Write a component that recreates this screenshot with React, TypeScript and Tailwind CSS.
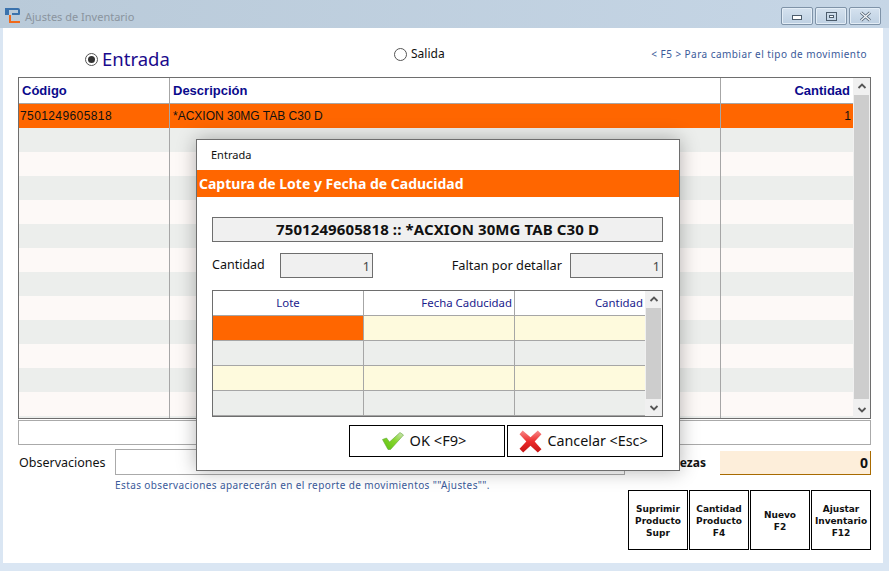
const tahoma = "font-['Noto_Sans','DejaVu_Sans',sans-serif]";

const mainRows = Array.from({ length: 13 }, (_, i) => i);

function Logo() {
  return (
    <svg width="17" height="17" viewBox="0 0 17 17" className="ml-[4px] mt-[7px] shrink-0">
      <path d="M1 1H14a2 2 0 0 1 2 2V7a1 1 0 0 1-1 1H8V6H14V3H5V8H1z" fill="#3a72ad" />
      <path d="M5 8H7V14H16V16H5z" fill="#f0691a" />
    </svg>
  );
}

function WinButton({ kind }: { kind: "min" | "max" | "close" }) {
  return (
    <div className="w-[32px] h-[18px] rounded-[2px] border border-[#7f93a8] bg-gradient-to-b from-[#d5e2ef] to-[#bed0e2] flex items-center justify-center shadow-[inset_0_0_0_1px_#e3edf6]">
      {kind === "min" && <div className="w-[10px] h-[5px] mt-[3px] border border-[#4c5c6c] bg-white" />}
      {kind === "max" && (
        <div className="w-[11px] h-[9px] border border-[#4c5c6c] flex items-center justify-center">
          <div className="w-[5px] h-[3px] border border-[#4c5c6c] bg-white" />
        </div>
      )}
      {kind === "close" && (
        <svg width="13" height="11" viewBox="0 0 13 11">
          <path d="M2 1.5l9 8M11 1.5l-9 8" stroke="#4c5c6c" strokeWidth="3" />
          <path d="M2 1.5l9 8M11 1.5l-9 8" stroke="#f2f5f8" strokeWidth="1.4" />
        </svg>
      )}
    </div>
  );
}

function Radio({ checked }: { checked?: boolean }) {
  return (
    <div className="w-[13px] h-[13px] rounded-full border border-[#555] bg-white flex items-center justify-center shrink-0">
      {checked && <div className="w-[7px] h-[7px] rounded-full bg-[#333]" />}
    </div>
  );
}

function ScrollBar({ thumb }: { thumb: string }) {
  return (
    <div className="w-[17px] flex flex-col bg-[#f0f0f0] items-center">
      <svg width="10" height="17" viewBox="0 0 10 17" className="shrink-0">
        <path d="M1.5 10L5 6.5 8.5 10" stroke="#555" strokeWidth="1.8" fill="none" />
      </svg>
      <div className={`${thumb} w-[15px] bg-[#cdcdcd]`} />
      <div className="flex-1" />
      <svg width="10" height="17" viewBox="0 0 10 17" className="shrink-0">
        <path d="M1.5 7L5 10.5 8.5 7" stroke="#555" strokeWidth="1.8" fill="none" />
      </svg>
    </div>
  );
}

function ActionButton({ lines }: { lines: string[] }) {
  return (
    <button className="w-[60px] h-[60px] pt-[2px] border border-black bg-white flex flex-col items-center justify-center font-['DejaVu_Sans',sans-serif] text-[9px] leading-[12px] font-bold text-[#111]">
      {lines.map((l) => (
        <span key={l}>{l}</span>
      ))}
    </button>
  );
}

function CheckIcon() {
  return (
    <svg width="22" height="18" viewBox="0 0 22 18">
      <defs>
        <linearGradient id="chk" x1="0" y1="1" x2="1" y2="0">
          <stop offset="0" stopColor="#5cc010" />
          <stop offset="0.55" stopColor="#86d62c" />
          <stop offset="1" stopColor="#d2e4c0" />
        </linearGradient>
      </defs>
      <path d="M0.5 7.5l4-1.5 3 4L18 0.5l3.5 2.5L8.5 17.5H6z" fill="url(#chk)" stroke="#62a838" strokeWidth="0.6" />
    </svg>
  );
}

function CrossIcon() {
  return (
    <svg width="23" height="23" viewBox="0 0 22 22">
      <defs>
        <linearGradient id="crs" x1="0" y1="0" x2="0" y2="1">
          <stop offset="0" stopColor="#f88a8a" />
          <stop offset="0.5" stopColor="#ec2a2a" />
          <stop offset="1" stopColor="#c41414" />
        </linearGradient>
      </defs>
      <path d="M3.5 0.5L11 7l7-6.5 3.5 3.5L15 11l6.5 7.5-3.5 3L11 15l-7 6.5-3.5-3.5L7 11 0.5 4z" fill="url(#crs)" />
    </svg>
  );
}

function LoteModal() {
  const rows = [
    ["bg-[#ff6600]", "bg-[#fefadd]", "bg-[#fefadd]"],
    ["bg-[#eceeec]", "bg-[#eceeec]", "bg-[#eceeec]"],
    ["bg-[#fefadd]", "bg-[#fefadd]", "bg-[#fefadd]"],
    ["bg-[#eceeec]", "bg-[#eceeec]", "bg-[#eceeec]"],
    ["bg-[#fefadd]", "bg-[#fefadd]", "bg-[#fefadd]"],
  ];
  return (
    <div className="absolute left-[196px] top-[139px] w-[484px] h-[332px] bg-white border border-[#6e6e6e] shadow-[0_0_18px_rgba(0,0,0,0.3)]">
      <div className="h-[30px] pl-[14px] pt-[7px] text-[11px] leading-[16px] text-[#111]">Entrada</div>
      <div className="h-[27px] bg-[#ff6600] pl-[2px] text-white font-bold text-[14px] leading-[27px]">
        Captura de Lote y Fecha de Caducidad
      </div>
      <div className="pl-[15px] pr-[16px] pt-[20px]">
        <div className="h-[25px] border border-[#6e6e6e] bg-[#f0f0f0] text-center font-bold text-[15px] tracking-[0.1px] leading-[23px] text-[#111]">
          7501249605818 :: *ACXION 30MG TAB C30 D
        </div>
        <div className="flex items-center h-[25px] mt-[11px] text-[12.5px] text-[#111]">
          <span className="w-[68px]">Cantidad</span>
          <div className="w-[93px] h-[25px] border border-[#6e6e6e] bg-[#f0f0f0] text-right pr-[2px] leading-[25px] text-[#444]">1</div>
          <span className="w-[189px] text-right text-[12.8px]">Faltan por detallar</span>
          <div className="ml-auto w-[93px] h-[25px] border border-[#6e6e6e] bg-[#f0f0f0] text-right pr-[2px] leading-[25px] text-[#444]">1</div>
        </div>
        <div className="flex mt-[12px] h-[127px] border border-[#6e6e6e] overflow-hidden">
          <div className="w-[432px] flex flex-col">
            <div className="flex h-[25px] shrink-0 border-b border-[#a6a6a6] text-[11.4px] leading-[24px] text-[#1a1a8c]">
              <div className="w-[151px] border-r border-[#a6a6a6] text-center">Lote</div>
              <div className="w-[151px] border-r border-[#a6a6a6] text-right pr-[2px]">Fecha Caducidad</div>
              <div className="w-[130px] text-right pr-[2px]">Cantidad</div>
            </div>
            {rows.map((cells, r) => (
              <div key={r} className="flex h-[25px] shrink-0 border-b border-[#a6a6a6]">
                <div className={`w-[151px] border-r border-[#a6a6a6] ${cells[0]}`} />
                <div className={`w-[151px] border-r border-[#a6a6a6] ${cells[1]}`} />
                <div className={`w-[130px] ${cells[2]}`} />
              </div>
            ))}
          </div>
          <ScrollBar thumb="h-[92px]" />
        </div>
        <div className="flex justify-end gap-[2px] mt-[8px]">
          <button className="w-[156px] h-[32px] pr-[6px] border border-black bg-white flex items-center justify-center gap-[6px] text-[14.6px] text-[#111]">
            <CheckIcon />
            <span>OK &lt;F9&gt;</span>
          </button>
          <button className="w-[156px] h-[32px] pr-[3px] border border-black bg-white flex items-center justify-center gap-[5px] text-[14.3px] text-[#111]">
            <CrossIcon />
            <span>Cancelar &lt;Esc&gt;</span>
          </button>
        </div>
      </div>
    </div>
  );
}

export default function App() {
  return (
    <div className={`relative w-[889px] h-[571px] overflow-hidden flex flex-col bg-[#dae6f3] ${tahoma}`}>
      <div className="h-[28px] shrink-0 flex bg-gradient-to-r from-[#b9cad9] to-[#c6d6e6]">
        <Logo />
        <span className="ml-[4px] mt-[9px] text-[11px] leading-[16px] text-[#8a949e]">Ajustes de Inventario</span>
        <div className="ml-auto mr-[8px] mt-[7px] flex gap-[2px]">
          <WinButton kind="min" />
          <WinButton kind="max" />
          <WinButton kind="close" />
        </div>
      </div>

      <div className="ml-[3px] w-[880px] h-[535px] bg-white pl-[15px] pr-[12px] flex flex-col">
        <div className="h-[49px] shrink-0 flex">
          <div className="w-[300px] pl-[67px] mt-[17px] h-[28px] flex items-center gap-[4px] text-[18.5px] text-[#1a0a8c]">
            <Radio checked />
            <span>Entrada</span>
          </div>
          <div className="ml-[76px] mt-[16px] h-[20px] flex items-center gap-[4px] text-[12px] text-[#111]">
            <Radio />
            <span>Salida</span>
          </div>
          <div className="ml-auto mr-[4px] mt-[18px] text-[10px] leading-[16px] tracking-[0.45px] text-[#3a5a9a]">
            &lt; F5 &gt; Para cambiar el tipo de movimiento
          </div>
        </div>

        <div className="flex h-[342px] shrink-0 border border-[#6e6e6e] font-['Liberation_Sans',sans-serif]">
          <div className="flex-1 flex flex-col overflow-hidden">
            <div className="flex h-[26px] shrink-0 border-b border-[#a6a6a6] font-bold text-[13px] leading-[25px] text-[#0a0a8c]">
              <div className="w-[151px] border-r border-[#a6a6a6] pl-[3px]">Código</div>
              <div className="w-[551px] border-r border-[#a6a6a6] pl-[3px]">Descripción</div>
              <div className="flex-1 text-right pr-[3px]">Cantidad</div>
            </div>
            <div className="flex h-[24px] shrink-0 bg-[#ff6600] text-[12px] leading-[24px] text-[#111]">
              <div className="w-[151px] border-r border-[#a6a6a6] pl-[1px] tracking-[0.4px]">7501249605818</div>
              <div className="w-[551px] border-r border-[#a6a6a6] pl-[3px]">*ACXION 30MG TAB C30 D</div>
              <div className="flex-1 text-right pr-[2px]">1</div>
            </div>
            {mainRows.map((i) => (
              <div key={i} className={`flex h-[24px] shrink-0 ${i % 2 === 0 ? "bg-[#eceeec]" : "bg-[#fdf9f7]"}`}>
                <div className="w-[151px] border-r border-[#a6a6a6]" />
                <div className="w-[551px] border-r border-[#a6a6a6]" />
                <div className="flex-1" />
              </div>
            ))}
          </div>
          <ScrollBar thumb="h-[304px]" />
        </div>

        <div className="h-[25px] mt-[1px] shrink-0 border border-[#aaaaaa]" />

        <div className="flex items-start mt-[4px] h-[26px] shrink-0">
          <span className="w-[97px] pl-[1px] text-[12.5px] leading-[27px] text-[#111]">Observaciones</span>
          <div className="w-[510px] h-[26px] border border-[#aaaaaa]" />
          <div className="flex-1 flex justify-end items-center mt-[2px]">
            <span className="mr-[14px] text-[12px] font-bold text-[#111]">Piezas</span>
            <div className="w-[151px] h-[24px] bg-[#fdeeda] border-b border-r border-[#a86a00] text-right pr-[2px] font-bold text-[14px] leading-[23px] text-[#111]">0</div>
          </div>
        </div>

        <div className="ml-[97px] mt-[3px] h-[11px] text-[10px] leading-[14px] tracking-[0.4px] text-[#3a5a9a]">
          Estas observaciones aparecerán en el reporte de movimientos ""Ajustes"".
        </div>

        <div className="flex justify-end gap-[1px] mt-[1px]">
          <ActionButton lines={["Suprimir", "Producto", "Supr"]} />
          <ActionButton lines={["Cantidad", "Producto", "F4"]} />
          <ActionButton lines={["Nuevo", "F2"]} />
          <ActionButton lines={["Ajustar", "Inventario", "F12"]} />
        </div>
      </div>

      <LoteModal />
    </div>
  );
}
